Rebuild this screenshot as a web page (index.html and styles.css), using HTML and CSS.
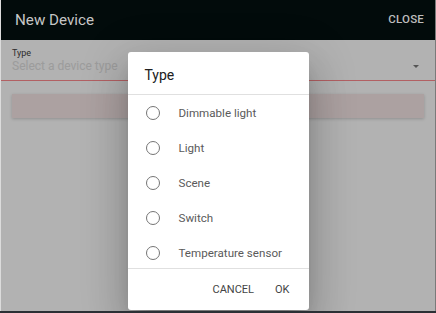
FILE: index.html
```html
<!DOCTYPE html>
<html lang="en">
<head>
  <meta charset="UTF-8">
  <title>New Device</title>
  <link rel="stylesheet" href="styles.css">
</head>
<body>

  <div class="window">
    <div class="topbar">
      <span class="title">New Device</span>
      <span class="close">CLOSE</span>
    </div>

    <div class="form">
      <div class="field">
        <label class="field-label">Type</label>
        <div class="select">
          <span class="placeholder">Select a device type</span>
          <span class="arrow"></span>
        </div>
      </div>
      <div class="error-box"></div>
    </div>

    <div class="backdrop">
      <div class="dialog">
        <h3 class="dialog-title">Type</h3>
        <div class="options">
          <div class="option"><span class="radio"></span>Dimmable light</div>
          <div class="option"><span class="radio"></span>Light</div>
          <div class="option"><span class="radio"></span>Scene</div>
          <div class="option"><span class="radio"></span>Switch</div>
          <div class="option"><span class="radio"></span>Temperature sensor</div>
        </div>
        <div class="actions">
          <button class="btn">CANCEL</button>
          <button class="btn">OK</button>
        </div>
      </div>
    </div>
  </div>

</body>
</html>
```

FILE: styles.css
```css
html, body { margin: 0; height: 100%; }
body {
  font-family: Roboto, "Liberation Sans", Arial, sans-serif;
  background: #2b3035;
}
.window {
  position: relative;
  height: 311px;
  background: #fff;
  border-left: 1px solid #dcdcdc;
  border-right: 1px solid #7a7a7a;
  overflow: hidden;
}
.topbar {
  height: 40px;
  background: #020b0b;
  display: flex;
  align-items: center;
  justify-content: space-between;
  padding: 0 11px 0 14px;
}
.title { color: #c6c6c6; font-size: 15.2px; }
.close { color: #bdbdbd; font-size: 11.5px; font-weight: 500; letter-spacing: 0.2px; margin-top: -3px; }

.form { padding: 7px 11px 0 11px; }
.field-label {
  display: block;
  font-size: 9px;
  line-height: 12px;
  color: #424242;
}
.select {
  display: flex;
  align-items: flex-start;
  justify-content: space-between;
  height: 20px;
  margin: 0 -11px;
  padding: 0 11px 1px 11px;
  border-bottom: 1px solid #ff8a8f;
}
.placeholder { font-size: 12px; line-height: 15px; color: #e0e0e0; }
.arrow {
  width: 0; height: 0;
  border-left: 3px solid transparent;
  border-right: 3px solid transparent;
  border-top: 3px solid #7a7a7a;
  margin: 6px 5px 0 0;
}
.error-box {
  margin-top: 13px;
  height: 24px;
  background: #f6e7e7;
  box-shadow: 0 1px 3px rgba(0,0,0,0.2);
}

.backdrop {
  position: absolute;
  top: 40px; left: 0; right: 0; bottom: 0;
  background: rgba(0,0,0,0.3);
  display: flex;
  justify-content: center;
  align-items: flex-start;
  padding-top: 12px;
}
.dialog {
  width: 181px;
  height: 258px;
  background: #fff;
  border-radius: 3px;
  display: flex;
  flex-direction: column;
  box-shadow: 0 11px 15px -7px rgba(0,0,0,.2), 0 24px 38px 3px rgba(0,0,0,.14), 0 9px 46px 8px rgba(0,0,0,.12);
}
.dialog-title {
  margin: 0;
  height: 43px;
  box-sizing: border-box;
  padding: 15px 0 0 17px;
  font-size: 14px;
  font-weight: 400;
  color: #212121;
  border-bottom: 1px solid #e0e0e0;
}
.options {
  height: 173px;
  overflow: hidden;
}
.option {
  height: 35px;
  display: flex;
  align-items: center;
  font-size: 11.6px;
  color: #5a5a5a;
}
.radio {
  width: 12px;
  height: 12px;
  border: 1.5px solid #757575;
  border-radius: 50%;
  margin: 0 19px 0 18px;
}
.actions {
  flex: 1;
  border-top: 1px solid #e0e0e0;
  display: flex;
  justify-content: flex-end;
  align-items: center;
  gap: 5px;
  padding-right: 11px;
}
.btn {
  background: none;
  border: none;
  font-family: inherit;
  font-size: 11px;
  color: #444;
  padding: 6px 8px;
}
```
